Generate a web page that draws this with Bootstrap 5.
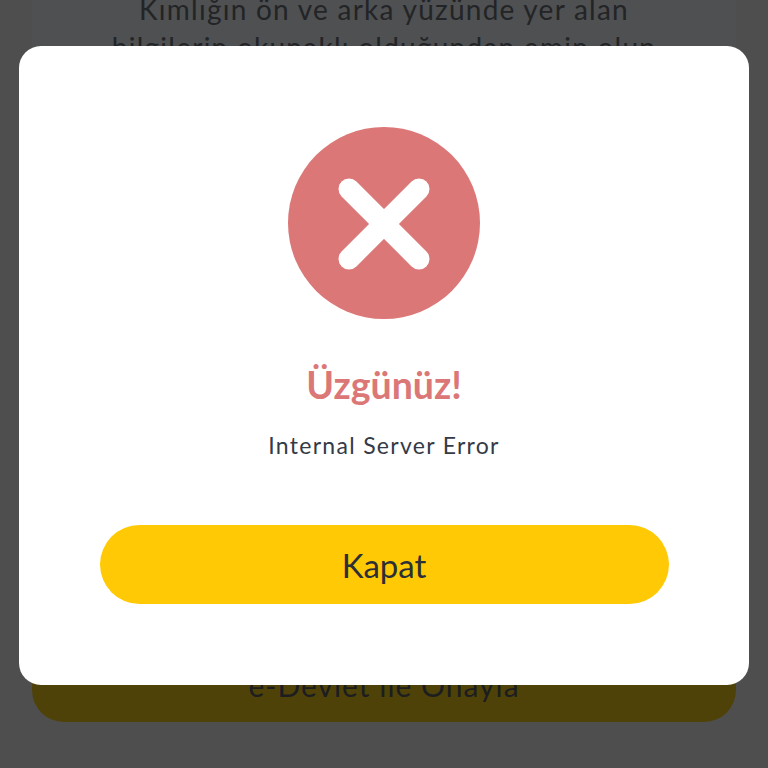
<!DOCTYPE html>
<html lang="tr">
<head>
<meta charset="utf-8">
<title>Üzgünüz</title>
<link href="https://cdn.jsdelivr.net/npm/bootstrap@5.3.0/dist/css/bootstrap.min.css" rel="stylesheet">
<style>
html, body { height: 100%; overflow: hidden; }
body { background: #4f4e4f; font-family: Lato, "Noto Sans", sans-serif; }
.page-panel { height: 768px; margin: 0 32px; padding-bottom: 46px; }
.under-text { margin: -10px 0 0; padding: 0 0 12px; font-size: 28px; line-height: 38px; letter-spacing: 1.25px; color: #232426; background: #4e5052; text-align: center; white-space: nowrap; }
.under-btn { height: 71px; padding-bottom: 2px; border-radius: 0 0 32px 32px; background: #4f4209; color: #1c1d1f; font-size: 30px; letter-spacing: 1px; }
.dialog-layer { padding: 46px 19px 83px; }
.dialog-box { border-radius: 22px; padding-top: 81px; }
.err-icon { display: block; width: 192px; height: 192px; margin-right: 1px; }
.err-title { margin: 44px 0 0; font-size: 37.5px; line-height: 44px; font-weight: 700; color: #dc7777; }
.err-msg { margin: 22px 0 0; font-size: 23px; line-height: 32px; letter-spacing: 1.3px; color: #343a46; }
.close-btn { width: 569px; height: 79px; margin-top: 64px; padding-top: 8px; border: 0; border-radius: 40px; background: #ffca05; color: #2c2f36; font-size: 33px; line-height: 1; }
.close-btn:hover, .close-btn:active { background: #ffca05; color: #2c2f36; }
</style>
</head>
<body>
<main class="page-panel d-flex flex-column">
  <p class="under-text">Kımlığın ön ve arka yüzünde yer alan<br>bilgilerin okunaklı olduğundan emin olup</p>
  <div class="under-btn mt-auto d-flex align-items-center justify-content-center">e-Devlet ile Onayla</div>
</main>
<div class="dialog-layer position-fixed top-0 start-0 w-100 h-100">
  <div class="dialog-box bg-white h-100 d-flex flex-column align-items-center text-center">
    <svg class="err-icon" viewBox="0 0 192 192" aria-hidden="true">
      <circle cx="96" cy="96" r="96" fill="#dc7777"/>
      <path d="M61 62 L131 132 M131 62 L61 132" stroke="#fff" stroke-width="21" stroke-linecap="round" fill="none"/>
    </svg>
    <h1 class="err-title">Üzgünüz!</h1>
    <p class="err-msg">Internal Server Error</p>
    <button type="button" class="btn close-btn">Kapat</button>
  </div>
</div>
<script src="https://cdn.jsdelivr.net/npm/bootstrap@5.3.0/dist/js/bootstrap.bundle.min.js"></script>
</body>
</html>
